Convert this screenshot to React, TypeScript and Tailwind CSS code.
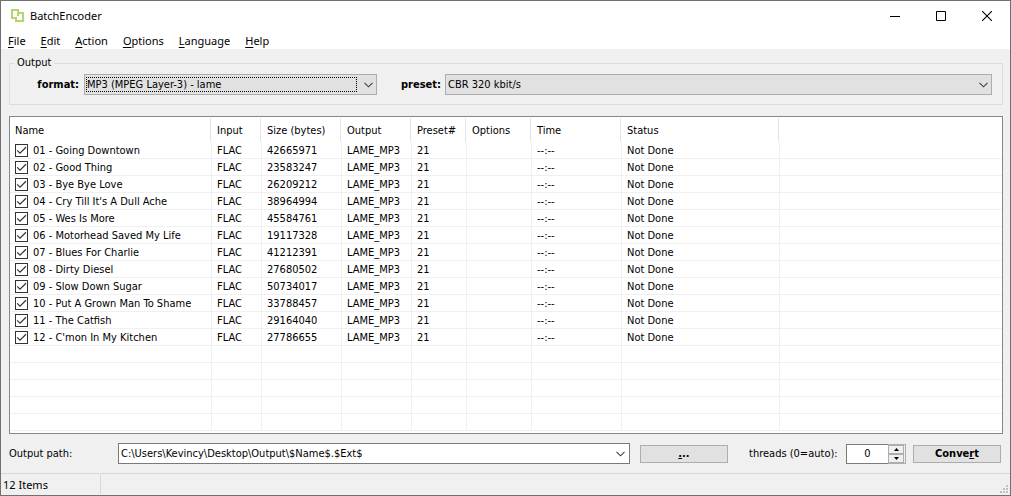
import { useState } from "react";

type Track = { name: string; size: string };

const tracks: Track[] = [
  { name: "01 - Going Downtown", size: "42665971" },
  { name: "02 - Good Thing", size: "23583247" },
  { name: "03 - Bye Bye Love", size: "26209212" },
  { name: "04 - Cry Till It's A Dull Ache", size: "38964994" },
  { name: "05 - Wes Is More", size: "45584761" },
  { name: "06 - Motorhead Saved My Life", size: "19117328" },
  { name: "07 - Blues For Charlie", size: "41212391" },
  { name: "08 - Dirty Diesel", size: "27680502" },
  { name: "09 - Slow Down Sugar", size: "50734017" },
  { name: "10 - Put A Grown Man To Shame", size: "33788457" },
  { name: "11 - The Catfish", size: "29164040" },
  { name: "12 - C'mon In My Kitchen", size: "27786655" },
];

const menus = ["File", "Edit", "Action", "Options", "Language", "Help"];

const columns = [
  { title: "Name", width: "w-[202px]" },
  { title: "Input", width: "w-[50px]" },
  { title: "Size (bytes)", width: "w-20" },
  { title: "Output", width: "w-[70px]" },
  { title: "Preset#", width: "w-[55px]" },
  { title: "Options", width: "w-[65px]" },
  { title: "Time", width: "w-[90px]" },
  { title: "Status", width: "w-[158px]" },
];

const emptyRows = [0, 1, 2, 3, 4];

function Chevron() {
  return (
    <svg width="9" height="6" viewBox="0 0 9 6" fill="none" stroke="#404040" strokeWidth="1.1" aria-hidden="true">
      <path d="M0.5 0.8 4.5 4.8 8.5 0.8" />
    </svg>
  );
}

function TitleBar() {
  return (
    <header className="flex h-[29px] items-center bg-white font-['Noto_Sans',sans-serif]">
      <svg className="ml-[10px]" width="13" height="13" viewBox="0 0 13 13" fill="none" stroke="#b4d66e" strokeWidth="2" aria-hidden="true">
        <path d="M1 1H7V4H12V12H5V9H1ZM7 4V7" />
      </svg>
      <h1 className="ml-1.5 flex-1">BatchEncoder</h1>
      <button aria-label="Minimize" className="flex h-full w-[46px] items-center justify-center">
        <svg width="10" height="10" viewBox="0 0 10 10" stroke="#000" aria-hidden="true"><path d="M0 5.5H10" /></svg>
      </button>
      <button aria-label="Maximize" className="flex h-full w-[46px] items-center justify-center">
        <svg width="10" height="10" viewBox="0 0 10 10" fill="none" stroke="#000" aria-hidden="true"><path d="M.5 .5H9.5V9.5H.5Z" /></svg>
      </button>
      <button aria-label="Close" className="flex h-full w-[46px] items-center justify-center">
        <svg width="10" height="10" viewBox="0 0 10 10" stroke="#000" strokeWidth="1.1" aria-hidden="true"><path d="M0 0 10 10M10 0 0 10" /></svg>
      </button>
    </header>
  );
}

function MenuBar() {
  return (
    <nav className="flex h-[19px] items-end gap-[15px] bg-white pl-[7px] font-['Noto_Sans',sans-serif]">
      {menus.map((menu) => (
        <button key={menu}>
          <span className="underline underline-offset-2">{menu[0]}</span>
          {menu.slice(1)}
        </button>
      ))}
    </nav>
  );
}

function OutputGroup() {
  return (
    <fieldset className="ml-2 mr-[7px] mt-2 flex h-12 min-w-0 flex-col border border-[#dcdcdc]">
      <legend className="ml-1 px-[3px] leading-3">Output</legend>
      <div className="flex items-center pr-2.5 pt-[5px]">
        <label htmlFor="format" className="w-[69px] text-right font-bold">format:</label>
        <div className="ml-[5px] grid w-[293px] items-center">
          <select id="format" className="h-[21px] w-full appearance-none border border-[#adadad] bg-[#e1e1e1] pl-[2px] outline-none [grid-area:1/1]">
            <option>MP3 (MPEG Layer-3) - lame</option>
          </select>
          <span className="pointer-events-none ml-[2px] mr-5 h-[15px] border border-dotted border-black [grid-area:1/1]" />
          <span className="pointer-events-none mr-1 justify-self-end [grid-area:1/1]"><Chevron /></span>
        </div>
        <label htmlFor="preset" className="ml-6 w-10 whitespace-nowrap font-bold">preset:</label>
        <div className="ml-1 grid flex-1 items-center">
          <select id="preset" className="h-[21px] w-full appearance-none border border-[#adadad] bg-[#e1e1e1] pl-[2px] outline-none [grid-area:1/1]">
            <option>CBR 320 kbit/s</option>
          </select>
          <span className="pointer-events-none mr-1 justify-self-end [grid-area:1/1]"><Chevron /></span>
        </div>
      </div>
    </fieldset>
  );
}

function TrackRow({ track }: { track: Track }) {
  const [checked, setChecked] = useState(true);
  const cell = "border-b border-r border-[#f0f0f0] pl-[5px] pt-px";
  return (
    <tr className="h-[17px]">
      <td className={cell}>
        <label className="flex items-center gap-[5px]">
          <span className="grid">
            <input
              type="checkbox"
              checked={checked}
              onChange={() => setChecked(!checked)}
              className="size-[13px] appearance-none border border-[#333] bg-white [grid-area:1/1]"
            />
            {checked && (
              <svg className="pointer-events-none [grid-area:1/1]" width="13" height="13" viewBox="0 0 13 13" fill="none" stroke="#333" strokeWidth="1.2" aria-hidden="true">
                <path d="M2.2 6.3 5 9.1 11 3.3" />
              </svg>
            )}
          </span>
          {track.name}
        </label>
      </td>
      <td className={cell}>FLAC</td>
      <td className={cell}>{track.size}</td>
      <td className={cell}>LAME_MP3</td>
      <td className={cell}>21</td>
      <td className={cell}></td>
      <td className={cell}>--:--</td>
      <td className={cell}>Not Done</td>
      <td className="border-b border-[#f0f0f0]"></td>
    </tr>
  );
}

function TrackTable() {
  return (
    <div className="ml-2 mr-[7px] mt-[11px] flex-1 border border-[#828790] bg-white">
      <table className="w-full table-fixed border-separate border-spacing-0 whitespace-nowrap text-left leading-[15px]">
        <thead>
          <tr>
            {columns.map((column) => (
              <th key={column.title} className={`${column.width} p-0 font-normal`}>
                <div className="mr-px mt-px flex h-6 items-center border-r border-[#e5e5e5] pl-[5px]">{column.title}</div>
              </th>
            ))}
            <th className="p-0"></th>
          </tr>
        </thead>
        <tbody>
          {tracks.map((track) => (
            <TrackRow key={track.name} track={track} />
          ))}
          {emptyRows.map((row) => (
            <tr key={row} className="h-[17px]">
              {columns.map((column) => (
                <td key={column.title} className="border-b border-r border-[#f0f0f0]"></td>
              ))}
              <td className="border-b border-[#f0f0f0]"></td>
            </tr>
          ))}
        </tbody>
      </table>
    </div>
  );
}

function ConvertBar() {
  const [threads, setThreads] = useState(0);
  const [path, setPath] = useState("C:\\Users\\Kevincy\\Desktop\\Output\\$Name$.$Ext$");
  return (
    <div className="flex h-[39px] items-center pl-2 pr-[7px]">
      <label htmlFor="path" className="w-[109px]">Output path:</label>
      <div className="flex h-[21px] flex-1 border border-[#7a7a7a] bg-white">
        <input id="path" value={path} onChange={(e) => setPath(e.target.value)} className="min-w-0 flex-1 pl-[2px] outline-none" />
        <button aria-label="Recent paths" className="flex w-[17px] items-center justify-center"><Chevron /></button>
      </div>
      <button aria-label="Browse" className="ml-2.5 flex h-[18px] w-[88px] items-center justify-center border border-[#adadad] bg-[#e1e1e1] font-bold">
        <span><span className="underline">.</span>..</span>
      </button>
      <label htmlFor="threads" className="ml-[21px] w-[87px] whitespace-nowrap">threads (0=auto):</label>
      <div className="ml-2.5 flex h-5 w-[60px] border border-[#adadad] bg-[#f0f0f0]">
        <input
          id="threads"
          inputMode="numeric"
          value={threads}
          onChange={(e) => setThreads(Number(e.target.value) || 0)}
          className="-my-px -ml-px min-w-0 flex-1 border-y border-l border-[#7a7a7a] bg-white text-center outline-none"
        />
        <div className="mr-px flex w-4 flex-col">
          <button aria-label="More threads" onClick={() => setThreads(threads + 1)} className="flex flex-1 items-center justify-center border border-[#adadad]">
            <svg width="5" height="3" viewBox="0 0 5 3" aria-hidden="true"><path d="M0 3 2.5 0 5 3Z" /></svg>
          </button>
          <button aria-label="Fewer threads" onClick={() => setThreads(Math.max(0, threads - 1))} className="flex flex-1 items-center justify-center border border-[#adadad]">
            <svg width="5" height="3" viewBox="0 0 5 3" aria-hidden="true"><path d="M0 0 2.5 3 5 0Z" /></svg>
          </button>
        </div>
      </div>
      <button className="ml-[7px] mr-0.5 flex h-[18px] w-[88px] items-center justify-center border border-[#adadad] bg-[#e1e1e1] font-bold">
        <span>Conve<span className="underline">r</span>t</span>
      </button>
    </div>
  );
}

function StatusBar() {
  return (
    <footer className="flex h-[22px] items-stretch border-t border-[#d7d7d7]">
      <p className="my-px flex w-[100px] items-center border-r border-[#d7d7d7] pl-0.5 font-['Noto_Sans',sans-serif]">12 Items</p>
      <svg className="mb-0.5 ml-auto mr-0.5 self-end" width="8" height="8" viewBox="0 0 8 8" fill="#bfbfbf" aria-hidden="true">
        <path d="M6 0h2v2H6zM3 3h2v2H3zM6 3h2v2H6zM0 6h2v2H0zM3 6h2v2H3zM6 6h2v2H6z" />
      </svg>
    </footer>
  );
}

export default function App() {
  return (
    <main className="flex min-h-screen flex-col border border-[#707070] bg-[#f0f0f0] font-['DejaVu_Sans_Condensed','Noto_Sans',sans-serif] text-[11px] leading-4 text-black">
      <TitleBar />
      <MenuBar />
      <OutputGroup />
      <TrackTable />
      <ConvertBar />
      <StatusBar />
    </main>
  );
}
